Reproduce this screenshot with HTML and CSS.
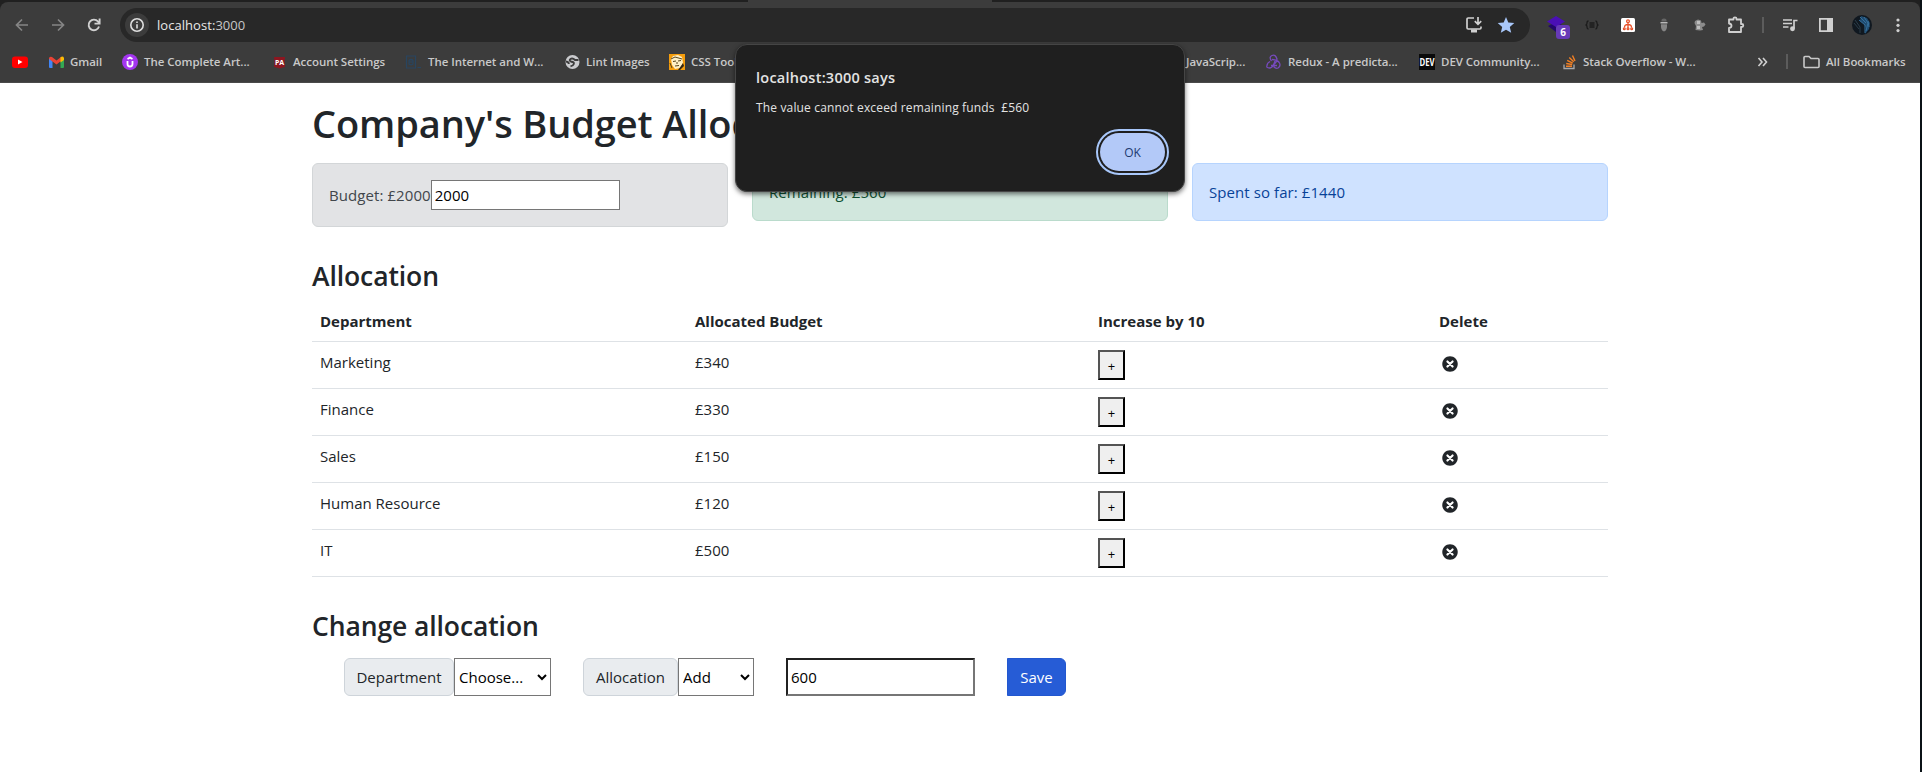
FILE: index.html
```html
<!DOCTYPE html>
<html lang="en">
<head>
<meta charset="utf-8">
<title>Company's Budget Allocation</title>
<link rel="stylesheet" href="styles.css">
</head>
<body>
<svg width="0" height="0" class="defs">
  <symbol id="delete" viewBox="0 0 512 512"><path fill="#212529" d="M256 8C119 8 8 119 8 256s111 248 248 248 248-111 248-248S393 8 256 8z"/><path stroke="#fff" stroke-width="68" stroke-linecap="round" d="M173 173L339 339M339 173L173 339"/></symbol>
</svg>
<div class="browser">
  <header class="chrome">
    <div class="toolbar">
      <span class="cell"><svg width="16" height="16" fill="none" stroke="#858585" stroke-width="1.7"><path d="M14 8H3M8 2.500L2.500 8L8 13.500"/></svg></span>
      <span class="cell"><svg width="16" height="16" fill="none" stroke="#858585" stroke-width="1.7"><path d="M2 8h11M8 2.500L13.500 8L8 13.500"/></svg></span>
      <span class="cell"><svg width="16" height="16" fill="none" stroke="#d0d0d0" stroke-width="1.900"><path d="M13 9.500A5.300 5.300 0 1 1 12 4.500L13.500 6.500M13.600 1.500V6.600H8.500"/></svg></span>
      <div class="omnibox">
        <span class="info"><svg width="16" height="16" fill="none" stroke="#dedede" stroke-width="1.600"><circle cx="8" cy="8" r="6.200"/><path d="M8 7.200V11.500M8 4.500V6"/></svg></span>
        <span class="url"><b>localhost:</b>3000</span>
        <svg class="install" width="18" height="18" fill="none" stroke="#d0d0d0" stroke-width="1.700"><path d="M9 2H3.200Q2 2 2 3.200V11.800Q2 13 3.200 13H14.800Q16 13 16 11.800V10.500M13 1v7M9.800 5.200L13 8.400L16.200 5.200"/><path d="M6 15h6" stroke-width="3"/></svg>
        <svg class="star" width="18" height="18"><path fill="#a8c7fa" d="M9 1l2.300 5.500 6 .500-4.500 3.900 1.400 5.900L9 13.700 3.800 16.800l1.400-5.900L.7 7l6-.500z"/></svg>
      </div>
      <span class="cell ext"><svg width="18" height="18"><path fill="#23076b" d="M1 10l8-4 8 4-8 6z"/><path fill="#4a0fb5" d="M9 0l9 5.500-9 5.500L0 5.500z"/></svg><i class="badge">6</i></span>
      <span class="cell"><svg width="14" height="12" fill="none" stroke="#1b1b1b" stroke-width="1.300"><path d="M3.500 2Q2 2 2 4T.5 6Q2 6 2 8T3.500 10M10.500 2Q12 2 12 4T13.500 6Q12 6 12 8T10.500 10M4.500 4h5M4.500 6h5M4.500 8h5"/></svg></span>
      <span class="cell"><svg width="14" height="14"><rect width="14" height="14" rx="1.500" fill="#fff"/><g fill="none" stroke="#e8532c" stroke-width="1.300"><circle cx="7" cy="3.300" r="1.400"/><path d="M7 5v5M3.500 9.500Q3.500 6.500 7 6.500T10.500 9.500"/><circle cx="3.300" cy="10.800" r=".9"/><circle cx="7" cy="10.800" r=".9"/><circle cx="10.700" cy="10.800" r=".9"/></g></svg></span>
      <span class="cell"><svg width="12" height="16"><path fill="#666" d="M3.500 4.500Q3 1.500 6 1.500t2.500 3z"/><path fill="#b9b9b9" d="M2.500 5h7v1.500h-7z"/><path fill="#858585" d="M3 7.300h6Q9.500 14 6 14.500Q2.500 14 3 7.300z"/></svg></span>
      <span class="cell"><svg width="14" height="14"><path fill="#8c8c8c" d="M2 3L5 1.500L8 2.500L8.500 5L11 4.500L12.500 6.500L11 8.500L9 9L10 12L7 12.500L2.500 12L3 8L1.500 5z"/><path fill="#bdbdbd" d="M4 3h3v3H4zM4 8h3v3H4z"/></svg></span>
      <span class="cell"><svg width="18" height="18" fill="none" stroke="#d0d0d0" stroke-width="1.800" stroke-linejoin="round"><path d="M2 3.500H6.500V2.800Q6.500 1.300 8 1.300T9.500 2.800V3.500H14V8H14.800Q16.300 8 16.300 9.500T14.800 11H14V16H2V12Q4.500 11.800 4.500 9.800T2 7.500z"/></svg></span>
      <span class="sep"></span>
      <span class="cell"><svg width="18" height="16" fill="none" stroke="#d0d0d0" stroke-width="1.700"><path d="M2 3h9M2 6.500h9M2 10h5.500M13 11.500V3.500h3.500"/><circle cx="11.500" cy="11.800" r="1.600" fill="#d0d0d0"/></svg></span>
      <span class="cell"><svg width="16" height="16"><path fill="none" stroke="#d0d0d0" stroke-width="1.800" d="M1.900 1.900h12.200v12.200H1.900z"/><path fill="#d0d0d0" d="M9 1h6v14H9z"/></svg></span>
      <span class="cell"><svg width="20" height="20"><circle cx="10" cy="10" r="10" fill="#101820"/><path fill="#1f4b70" d="M9 1l6 2 3 5-1 6-4 5 1-6-2-4-4-3z"/><g fill="none" stroke="#35709c"><path d="M8 2l6 6M12 2l4 6-2 8M7 5l6 5v8M16 6l1 6"/></g><path fill="none" stroke="#2b3d49" d="M2 8l5 6M3 5l5 7v6"/></svg></span>
      <span class="cell"><svg width="4" height="16" fill="#d0d0d0"><circle cx="2" cy="3" r="1.600"/><circle cx="2" cy="8.300" r="1.600"/><circle cx="2" cy="13.600" r="1.600"/></svg></span>
    </div>
    <nav class="bookmarks">
      <span><svg width="16" height="16"><rect y="2.500" width="16" height="11.500" rx="3" fill="#f00"/><path fill="#fff" d="M6 5.500v5L10.500 8z"/></svg></span>
      <span><svg width="15" height="16"><path fill="#4285f4" d="M0 4h3.500v10H1Q0 14 0 13z"/><path fill="#34a853" d="M11.500 4H15v9q0 1-1 1h-2.500z"/><path fill="#ea4335" d="M0 4Q1 2 3 3l4.500 3.500L12 3v4L7.500 10.500 0 5z"/><path fill="#fbbc04" d="M11.500 3.200Q14 1.500 15 4v2l-3.500 2.500z"/></svg>Gmail</span>
      <span><svg width="16" height="16"><circle cx="8" cy="8" r="8" fill="#a435f0"/><path fill="none" stroke="#fff" stroke-width="1.800" d="M5.500 7v3q0 2.500 2.500 2.500t2.500-2.500V7M5.500 5L8 3.500 10.500 5"/></svg>The Complete Art...</span>
      <span><svg width="15" height="16"><path fill="#8d1620" d="M2 3h11l-.500 5 .500 5q-2 0-5.500 1.500Q4 13 2 13l.500-5z"/><text x="7.500" y="11" text-anchor="middle" class="pa">PA</text></svg>Account Settings</span>
      <span><svg width="17" height="16" fill="none" stroke="#284560" stroke-width="1.200"><path d="M1.500 2h9v12h-9zM4 6.500q2-2 4 0v3.500q-2 1.500-4 0zM4 8h4M12.500 13.500H16"/></svg>The Internet and W...</span>
      <span><svg width="15" height="16"><circle cx="7.500" cy="8" r="7" fill="#c9cacd"/><path fill="none" stroke="#3c3c3c" stroke-width="1.900" d="M13.500 6H10Q7.500 3.500 5.500 5T6.500 7.800Q9.500 8 8.800 10T5.500 12.300M1 7.500Q4 8 3.800 10"/></svg>Lint Images</span>
      <span><svg width="16" height="16"><path fill="#f59d0c" d="M0 0h16v16H0z"/><path fill="#fff0c5" d="M2 5l2-3 5-1 4 2 1 6-3 5-5 1-3-4z"/><path fill="none" stroke="#57431c" stroke-width="1" d="M2 5l4-2 7 2M4 7.500l3-.5M9 7l3-.5M8 8v2M6 12l4-.5M1 9l2 5"/><path fill="#322614" d="M14 9l1 3-4 4H9l3-4z"/></svg>CSS Tools</span>
      <span>JavaScrip...</span>
      <span><svg width="16" height="16" fill="none" stroke="#764abc" stroke-width="1.300"><path d="M5.500 7Q2.500 3 6 1.500T11 5Q11 8 8.500 10M6 5.500Q12 6 13.500 9T12 14Q10 15 7.500 12.500M9 7Q7 14 3.500 14T1 11.500Q1 9 4 7.500M5 11.500h6"/></svg>Redux - A predicta...</span>
      <span><svg width="16" height="16"><path fill="#0a0a0a" d="M0 0h16v16H0z"/><text x="8" y="12" text-anchor="middle" textLength="15" lengthAdjust="spacingAndGlyphs" class="dev">DEV</text></svg>DEV Community...</span>
      <span class="so"><svg width="14" height="16" fill="none"><path stroke="#a8a9ac" stroke-width="1.300" d="M1 10.500v4h10v-4"/><path stroke="#f48024" stroke-width="1.400" d="M3 12.300h6M3.200 9.500l6 1M4.200 6.300l5.500 2.800M6.300 3.500l4.400 4.300M9.500 1.500l2.500 5.500"/></svg>Stack Overflow - W...</span>
      <span><svg width="12" height="12" fill="none" stroke="#d0d0d0" stroke-width="1.600"><path d="M1.500 2L5 6 1.500 10M6 2l3.500 4L6 10"/></svg></span>
      <span><i class="bar"></i></span>
      <span class="all"><svg width="17" height="16" fill="none" stroke="#c9c9c9" stroke-width="1.600"><path d="M1 3.500Q1 2.500 2 2.500H6L8 4.500H15Q16 4.500 16 5.500V12.500Q16 13.500 15 13.500H2Q1 13.500 1 12.500z"/></svg>All Bookmarks</span>
    </nav>
  </header>

  <main class="container">
    <h1>Company's Budget Allocation</h1>
    <div class="summary">
      <div class="alert secondary"><span class="t">Budget: £2000</span><input type="text" value="2000"></div>
      <div class="alert success"><span class="t">Remaining: £560</span></div>
      <div class="alert primary"><span class="t">Spent so far: £1440</span></div>
    </div>
    <h3>Allocation</h3>
    <table>
      <thead><tr><th class="c1">Department</th><th class="c2">Allocated Budget</th><th class="c3">Increase by 10</th><th>Delete</th></tr></thead>
      <tbody>
        <tr><td>Marketing</td><td>£340</td><td><button class="plus">+</button></td><td><svg class="del"><use href="#delete"/></svg></td></tr>
        <tr><td>Finance</td><td>£330</td><td><button class="plus">+</button></td><td><svg class="del"><use href="#delete"/></svg></td></tr>
        <tr><td>Sales</td><td>£150</td><td><button class="plus">+</button></td><td><svg class="del"><use href="#delete"/></svg></td></tr>
        <tr><td>Human Resource</td><td>£120</td><td><button class="plus">+</button></td><td><svg class="del"><use href="#delete"/></svg></td></tr>
        <tr><td>IT</td><td>£500</td><td><button class="plus">+</button></td><td><svg class="del"><use href="#delete"/></svg></td></tr>
      </tbody>
    </table>
    <h3 class="change">Change allocation</h3>
    <div class="form">
      <label class="prepend dep">Department</label><select class="s1"><option>Choose...</option></select>
      <label class="prepend alloc">Allocation</label><select class="s2"><option>Add</option></select>
      <input class="cost" type="text" value="600">
      <button class="save">Save</button>
    </div>
  </main>
</div>
<div class="dialog">
  <div class="title">localhost:3000 says</div>
  <div class="msg">The value cannot exceed remaining funds&nbsp; £560</div>
  <button class="ok">OK</button>
</div>
</body>
</html>
```
FILE: styles.css
```css
* { box-sizing: border-box; }
body {
  margin: 0;
  height: 772px;
  overflow: hidden;
  background: #0b1216;
  font-family: "Open Sans", "Noto Sans", sans-serif;
  font-size: 15px;
  line-height: 24px;
  color: #212529;
}
.defs { position: absolute; }
.browser { width: 1920px; height: 772px; background: #fff; }

/* browser chrome */
.chrome {
  height: 83px;
  padding-top: 2px;
  background: linear-gradient(to right, #202020 748px, #3c3c3c 748px, #3c3c3c 992px, #202020 992px);
}
.toolbar {
  display: flex;
  align-items: center;
  height: 46px;
  padding-left: 4px;
  background: #3c3c3c;
  border-radius: 8px 8px 0 0;
}
.cell {
  position: relative;
  flex: none;
  width: 36px;
  height: 36px;
  display: flex;
  align-items: center;
  justify-content: center;
}
.omnibox {
  display: flex;
  align-items: center;
  width: 1410px;
  height: 34px;
  margin: 0 8px;
  padding-left: 5px;
  background: #282828;
  border-radius: 17px;
}
.info {
  display: flex;
  align-items: center;
  justify-content: center;
  width: 24px;
  height: 24px;
  border-radius: 50%;
  background: #3c3c3c;
}
.url { margin-left: 8px; font-size: 13px; letter-spacing: 0.05px; color: #c7c7c7; }
.url b { font-weight: 400; color: #e8e8e8; }
.install { margin-left: auto; }
.star { margin: 0 15px 0 14px; }
.badge {
  position: absolute;
  left: 18px;
  top: 18px;
  width: 14px;
  height: 14px;
  border-radius: 3px;
  background: #673ab7;
  color: #fff;
  font: 700 10px/14px "Open Sans", sans-serif;
  text-align: center;
}
.sep { flex: none; width: 2px; height: 16px; margin: 0 8px; background: #5c5c5c; }
.bookmarks {
  display: grid;
  grid-template-columns: 37px 73px 150px 133px 160px 104px 517px 80px 153px 144px 194px 29px 17px auto;
  align-items: center;
  height: 35px;
  padding: 0 0 7px 12px;
  background: #3c3c3c;
  border-bottom: 1px solid #4a4a4a;
  color: #c9c9c9;
  font-size: 11.5px;
  font-weight: 600;
  letter-spacing: -0.04px;
  white-space: nowrap;
}
.bookmarks span { display: flex; align-items: center; gap: 6px; }
.bar { width: 2px; height: 15px; background: #5c5c5c; }
.pa { font: 700 7px "Open Sans", sans-serif; fill: #fff; }
.dev { font: 700 10px "Open Sans", sans-serif; fill: #fff; }

/* page */
.container { width: 1320px; margin: 0 auto; padding: 16px 12px 0; }
h1 { margin: 0 0 16px; padding-top: 1px; font-size: 38px; line-height: 47px; font-weight: 600; letter-spacing: -0.1px; }
h3 { margin: 0 0 8px; padding-top: 2px; font-size: 26.5px; line-height: 31.6px; font-weight: 600; letter-spacing: -0.1px; }
.summary { display: grid; grid-template-columns: repeat(3, 416px); gap: 24px; align-items: start; height: 96px; }
.alert { display: flex; align-items: center; padding: 16px; border: 1px solid; border-radius: 6px; height: 58px; }
.secondary { height: 64px; background: #e2e3e5; border-color: #d3d6d8; color: #41464b; }
.success { background: #d1e7dd; border-color: #badbcc; color: #0f5132; }
.primary { background: #cfe2ff; border-color: #b6d4fe; color: #084298; }
.alert .t { letter-spacing: 0.08px; }
.alert input {
  width: 189px;
  height: 30px;
  padding: 1px 3px;
  border: 1px solid #767676;
  border-radius: 0;
  font: 15px "Open Sans", sans-serif;
  color: #000;
}
table { width: 1296px; table-layout: fixed; border-collapse: collapse; }
.c1 { width: 375px; }
.c2 { width: 403px; }
.c3 { width: 341px; }
th, td { padding: 8px; border-bottom: 1px solid #dee2e6; text-align: left; vertical-align: top; }
th { height: 41px; font-weight: 700; }
td { height: 47px; }
.plus {
  display: block;
  width: 27px;
  height: 30px;
  padding: 2px 0 0;
  border: 2px outset #000;
  border-radius: 0;
  background: #efefef;
  font: 13px "Open Sans", sans-serif;
  color: #000;
}
.del { display: block; width: 16px; height: 16px; margin: 6px 0 0 3px; }
h3.change { margin: 32px 0 15px; }
.form { display: flex; height: 38px; padding-left: 32px; }
.prepend {
  height: 38px;
  padding-top: 6px;
  background: #e9ecef;
  border: 1px solid #ced4da;
  border-radius: 6px;
  text-align: center;
}
.dep { width: 110px; }
.alloc { width: 95px; margin-left: 32px; }
select {
  height: 38px;
  padding: 0;
  border: 1px solid #767676;
  border-radius: 0;
  background: #fff;
  font: 15px "Open Sans", sans-serif;
  color: #000;
}
.s1 { width: 97px; }
.s2 { width: 76px; }
.cost {
  width: 189px;
  margin-left: 32px;
  padding: 1px 3px;
  border: 2px inset #767676;
  font: 15px "Open Sans", sans-serif;
  color: #000;
}
.save {
  width: 59px;
  margin-left: 32px;
  padding: 0;
  border: 1px solid #2257cf;
  border-radius: 0 6px 6px 0;
  background: #265cd6;
  font: 15px "Open Sans", sans-serif;
  color: #fff;
}

/* alert dialog over the page */
.dialog {
  position: absolute;
  left: 735px;
  top: 44px;
  width: 450px;
  height: 148px;
  display: flex;
  flex-direction: column;
  padding: 21px 20px;
  background: #1f1f1f;
  border: 1px solid #454545;
  border-radius: 12px;
  box-shadow: 0 2px 5px rgba(0, 0, 0, .55);
  color: #e3e3e3;
}
.title { font-size: 14.5px; line-height: 24px; font-weight: 600; letter-spacing: 0.25px; }
.msg { margin-top: 8px; font-size: 12px; line-height: 20px; letter-spacing: 0.15px; }
.ok {
  flex: none;
  width: 65px;
  height: 38px;
  margin: 15px -1px 0 auto;
  border: 0;
  border-radius: 19px;
  background: #b3c9f8;
  outline: 2px solid #a8c7fa;
  outline-offset: 2px;
  font: 500 12px "Open Sans", sans-serif;
  color: #1c3a70;
}
```
